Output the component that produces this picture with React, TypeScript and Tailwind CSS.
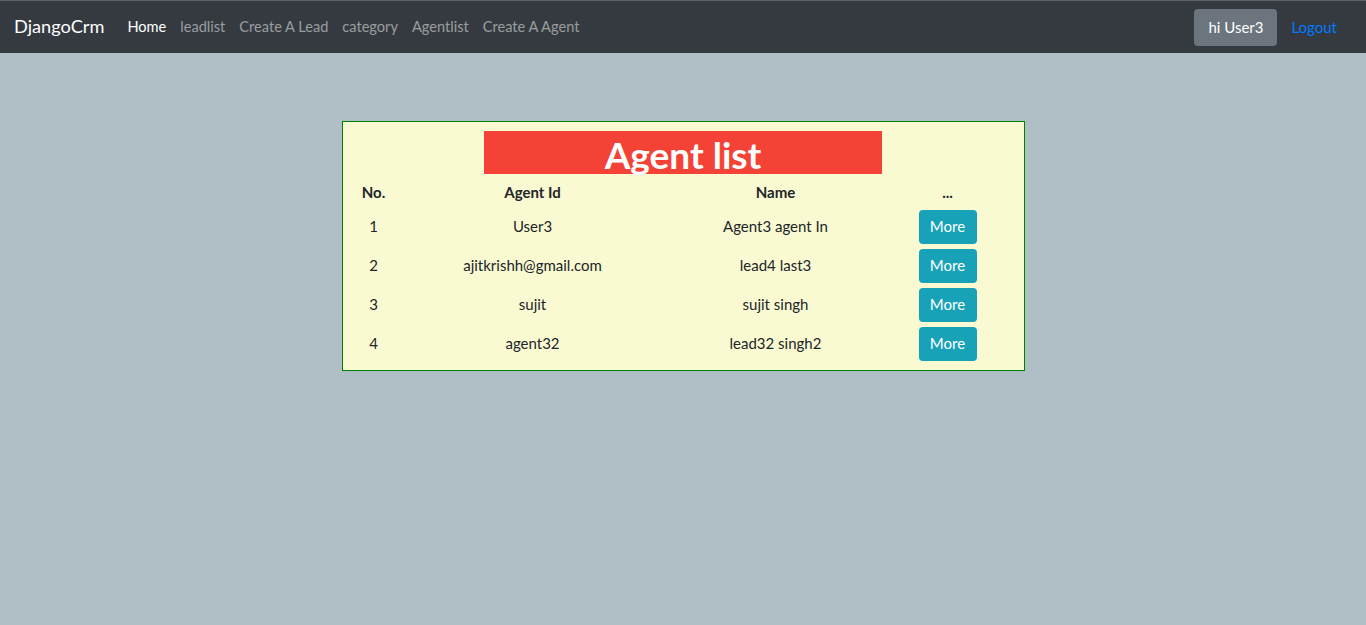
const agents = [
  { no: 1, id: "User3", name: "Agent3 agent In" },
  { no: 2, id: "ajitkrishh@gmail.com", name: "lead4 last3" },
  { no: 3, id: "sujit", name: "sujit singh" },
  { no: 4, id: "agent32", name: "lead32 singh2" },
];

const cols = "grid grid-cols-[62px_256px_230px_114px] items-center text-center";

export default function App() {
  return (
    <div className="min-h-screen bg-[#b0bec5] font-['Lato','Open_Sans',sans-serif] text-[15px] text-[#212529]">
      {/* navbar */}
      <nav className="flex h-[53px] items-center border-t border-[#5c5f63] bg-[#343a40] pl-[14px] pr-[29px]">
        <span className="mr-[23px] text-[18.2px] text-white">DjangoCrm</span>
        <div className="flex items-center gap-[14px] text-[14.6px]">
          <span className="text-white">Home</span>
          <span className="text-white/50">leadlist</span>
          <span className="text-white/50">Create A Lead</span>
          <span className="text-white/50">category</span>
          <span className="text-white/50">Agentlist</span>
          <span className="text-white/50">Create A Agent</span>
        </div>
        <div className="ml-auto flex items-center gap-[14px]">
          <button className="h-[37px] w-[83px] rounded bg-[#6c757d] text-[15px] text-white">hi User3</button>
          <span className="text-[#007bff]">Logout</span>
        </div>
      </nav>

      {/* agent card */}
      <div className="mx-auto mt-[68px] w-1/2 border border-[#008000] bg-[#fafad2] pb-[7px] pt-[9px]">
        <div className="mx-auto flex h-[43px] w-[398px] items-center justify-center bg-[#f44336]">
          <h1 className="mt-[4px] text-[37px] font-bold leading-none text-white">Agent list</h1>
        </div>
        <div className={`${cols} mt-[4px] h-[29px] font-bold`}>
          <span>No.</span>
          <span>Agent Id</span>
          <span>Name</span>
          <span>...</span>
        </div>
        {agents.map((a) => (
          <div key={a.no} className={`${cols} h-[39px]`}>
            <span>{a.no}</span>
            <span>{a.id}</span>
            <span>{a.name}</span>
            <span className="flex justify-center">
              <button className="h-[34px] w-[58px] rounded bg-[#17a2b8] text-[15px] text-white">More</button>
            </span>
          </div>
        ))}
      </div>
    </div>
  );
}
